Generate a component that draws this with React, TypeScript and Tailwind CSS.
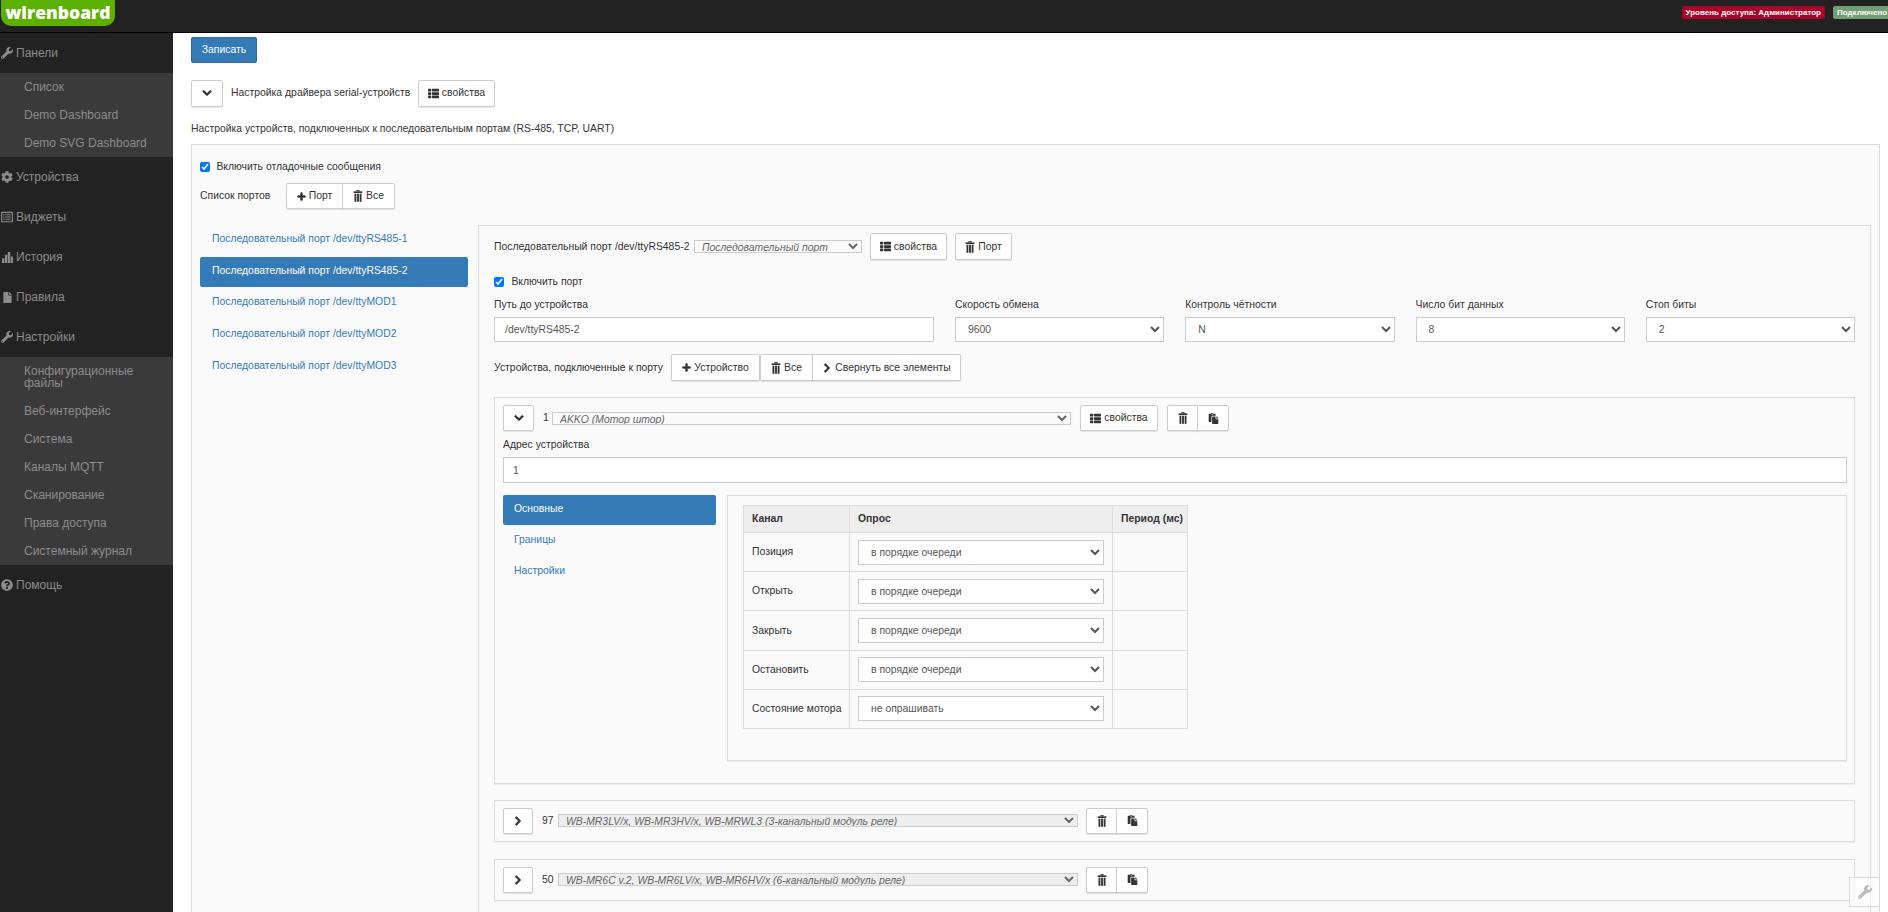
import type { ReactNode } from 'react';
import {
  FaChevronDown,
  FaChevronRight,
  FaCog,
  FaFile,
  FaPaste,
  FaPlus,
  FaQuestionCircle,
  FaRegListAlt,
  FaThList,
  FaWrench,
} from 'react-icons/fa';

function TrashIcon() {
  return (
    <svg viewBox="0 0 12 14" className="h-[12px] w-[10px]" fill="currentColor">
      <rect x="4" y="0" width="4" height="1.4" />
      <rect x="0.8" y="1.4" width="10.4" height="2" />
      <rect x="1.8" y="4.2" width="2.2" height="9.8" />
      <rect x="4.9" y="4.2" width="2.2" height="9.8" />
      <rect x="8" y="4.2" width="2.2" height="9.8" />
    </svg>
  );
}

function StatsIcon() {
  return (
    <svg viewBox="0 0 12 12" className="h-[11px] w-[11px]" fill="currentColor">
      <rect x="0" y="7" width="2.6" height="5" />
      <rect x="3.2" y="3" width="2.6" height="9" />
      <rect x="6.4" y="0" width="2.6" height="12" />
      <rect x="9.6" y="5" width="2.4" height="7" />
    </svg>
  );
}

function MenuItem({ icon, label }: { icon: ReactNode; label: string }) {
  return (
    <div className="flex h-[40px] items-center gap-[3px] pl-[1px]">
      <span className="flex w-[12px] justify-center">{icon}</span>
      <span>{label}</span>
    </div>
  );
}

function SubItem({ label }: { label: string }) {
  return <div className="flex h-[28px] items-center pl-[24px]">{label}</div>;
}

function Sidebar() {
  return (
    <aside className="flex w-[173px] shrink-0 flex-col bg-[#222222] text-[12px] text-[#8c8c8c]">
      <MenuItem icon={<FaWrench size={12} />} label="Панели" />
      <div className="bg-[#3a3a3a]">
        <SubItem label="Список" />
        <SubItem label="Demo Dashboard" />
        <SubItem label="Demo SVG Dashboard" />
      </div>
      <MenuItem icon={<FaCog size={12} />} label="Устройства" />
      <MenuItem icon={<FaRegListAlt size={12} />} label="Виджеты" />
      <MenuItem icon={<StatsIcon />} label="История" />
      <MenuItem icon={<FaFile size={11} />} label="Правила" />
      <MenuItem icon={<FaWrench size={12} />} label="Настройки" />
      <div className="bg-[#3a3a3a]">
        <div className="flex h-[40px] items-center pl-[24px] leading-[12px]">
          Конфигурационные
          <br />
          файлы
        </div>
        <SubItem label="Веб-интерфейс" />
        <SubItem label="Система" />
        <SubItem label="Каналы MQTT" />
        <SubItem label="Сканирование" />
        <SubItem label="Права доступа" />
        <SubItem label="Системный журнал" />
      </div>
      <MenuItem icon={<FaQuestionCircle size={12} />} label="Помощь" />
    </aside>
  );
}

function Btn({ children, className = '' }: { children: ReactNode; className?: string }) {
  return (
    <button
      type="button"
      className={`inline-flex items-center justify-center gap-[3px] border border-[#cccccc] bg-white text-[#333333] shadow-[0_1px_1px_rgba(0,0,0,0.1)] ${className}`}
    >
      {children}
    </button>
  );
}

const boldIcon = 'stroke-current stroke-[40]';

function Toggle({ open, className = 'w-[31px]' }: { open: boolean; className?: string }) {
  return (
    <Btn className={`h-[26px] rounded-[2px] ${className}`}>
      {open ? <FaChevronDown size={10} className={boldIcon} /> : <FaChevronRight size={10} className={boldIcon} />}
    </Btn>
  );
}

function Props({ className }: { className: string }) {
  return (
    <Btn className={`rounded-[2px] ${className}`}>
      <FaThList size={11} />
      свойства
    </Btn>
  );
}

function Field({ label, children }: { label: string; children: ReactNode }) {
  return (
    <div>
      <div className="h-[12px] leading-[12px]">{label}</div>
      <div className="mt-[6px]">{children}</div>
    </div>
  );
}

function FormSelect({ value }: { value: string }) {
  return (
    <select
      defaultValue={value}
      className="h-[25px] w-full border border-[#cccccc] bg-white pl-[8px] text-[#555555]"
    >
      <option>{value}</option>
    </select>
  );
}

function DeviceActions() {
  return (
    <div className="flex">
      <Btn className="h-[26px] w-[31px] rounded-l-[2px]">
        <TrashIcon />
      </Btn>
      <Btn className="-ml-px h-[26px] w-[32px] rounded-r-[2px]">
        <FaPaste size={11} />
      </Btn>
    </div>
  );
}

const channels = [
  { name: 'Позиция', poll: 'в порядке очереди' },
  { name: 'Открыть', poll: 'в порядке очереди' },
  { name: 'Закрыть', poll: 'в порядке очереди' },
  { name: 'Остановить', poll: 'в порядке очереди' },
  { name: 'Состояние мотора', poll: 'не опрашивать' },
];

function ChannelTable() {
  return (
    <table className="w-[444px] table-fixed border-collapse border border-[#dddddd]">
      <colgroup>
        <col className="w-[106px]" />
        <col className="w-[263px]" />
        <col className="w-[75px]" />
      </colgroup>
      <thead>
        <tr className="h-[27px] bg-[#eeeeee] text-left font-bold">
          <th className="border border-[#dddddd] px-[8px]">Канал</th>
          <th className="border border-[#dddddd] px-[8px]">Опрос</th>
          <th className="whitespace-nowrap border border-[#dddddd] px-[8px]">Период (мс)</th>
        </tr>
      </thead>
      <tbody>
        {channels.map((c) => (
          <tr key={c.name} className="h-[39.2px]">
            <td className="whitespace-nowrap border border-[#dddddd] px-[8px]">{c.name}</td>
            <td className="border border-[#dddddd] px-[8px]">
              <FormSelect value={c.poll} />
            </td>
            <td className="border border-[#dddddd]" />
          </tr>
        ))}
      </tbody>
    </table>
  );
}

function ExpandedDevice() {
  return (
    <div className="mt-[16px] border border-[#dddddd] pb-[22px] pl-[8px] pr-[7px] pt-[7px] shadow-[0_1px_1px_rgba(0,0,0,0.05)]">
      <div className="flex h-[26px] items-center">
        <Toggle open />
        <span className="ml-[9px] w-[9px]">1</span>
        <select
          defaultValue="akko"
          className="h-[13px] w-[519px] border border-[#cccccc] py-0 pl-[3px] italic leading-none text-[#666666]"
        >
          <option value="akko">AKKO (Мотор штор)</option>
        </select>
        <Props className="ml-[9px] h-[26px] w-[78px]" />
        <div className="ml-[9px]">
          <DeviceActions />
        </div>
      </div>
      <div className="mt-[8px] h-[12px] leading-[12px]">Адрес устройства</div>
      <input
        readOnly
        value="1"
        className="mt-[6px] block h-[26px] w-full border border-[#cccccc] bg-white pl-[9px] text-[#555555]"
      />
      <div className="mt-[12px] flex gap-[11px]">
        <div className="flex w-[213px] shrink-0 flex-col gap-[1px]">
          <div className="flex h-[30px] items-center rounded-[2px] bg-[#337ab7] pb-[2px] pl-[11px] text-white">Основные</div>
          <div className="flex h-[30px] items-center pb-[2px] pl-[11px] text-[#337ab7]">Границы</div>
          <div className="flex h-[30px] items-center pb-[2px] pl-[11px] text-[#337ab7]">Настройки</div>
        </div>
        <div className="flex-1 border border-[#dddddd] pb-[31px] pl-[15px] pt-[9px] shadow-[0_1px_1px_rgba(0,0,0,0.05)]">
          <ChannelTable />
        </div>
      </div>
    </div>
  );
}

function CollapsedDevice({ num, name }: { num: string; name: string }) {
  return (
    <div className="flex h-[42px] items-center border border-[#dddddd] pl-[8px] shadow-[0_1px_1px_rgba(0,0,0,0.05)]">
      <Toggle open={false} className="w-[30px]" />
      <span className="ml-[9px] w-[16px]">{num}</span>
      <select
        defaultValue={name}
        className="h-[13px] w-[520px] border border-[#cccccc] bg-[#eeeeee] py-0 pl-[3px] italic leading-none text-[#666666]"
      >
        <option>{name}</option>
      </select>
      <div className="ml-[8px]">
        <DeviceActions />
      </div>
    </div>
  );
}

function PortPanel() {
  return (
    <div className="flex-1 border-l border-r border-t border-[#dddddd] px-[15px] pt-[7px]">
      <div className="flex h-[27px] items-center">
        <span className="w-[200px] whitespace-nowrap">Последовательный порт /dev/ttyRS485-2</span>
        <select
          defaultValue="serial"
          className="h-[13px] w-[168px] border border-[#cccccc] py-0 pl-[3px] italic leading-none text-[#666666]"
        >
          <option value="serial">Последовательный порт</option>
        </select>
        <Props className="ml-[8px] h-[27px] w-[77px]" />
        <Btn className="ml-[8px] h-[27px] w-[57px] rounded-[2px]">
          <TrashIcon />
          Порт
        </Btn>
      </div>
      <label className="mt-[16px] flex h-[12px] items-center gap-[7px]">
        <input type="checkbox" defaultChecked className="h-[10.4px] w-[10.4px]" />
        Включить порт
      </label>
      <div className="mt-[11px] grid grid-cols-[440px_repeat(4,1fr)] gap-x-[21px]">
        <Field label="Путь до устройства">
          <input
            readOnly
            value="/dev/ttyRS485-2"
            className="block h-[25px] w-full border border-[#cccccc] bg-white pl-[10px] text-[#555555]"
          />
        </Field>
        <Field label="Скорость обмена">
          <FormSelect value="9600" />
        </Field>
        <Field label="Контроль чётности">
          <FormSelect value="N" />
        </Field>
        <Field label="Число бит данных">
          <FormSelect value="8" />
        </Field>
        <Field label="Стоп биты">
          <FormSelect value="2" />
        </Field>
      </div>
      <div className="mt-[12px] flex h-[27px] items-center">
        <span className="w-[177px] whitespace-nowrap">Устройства, подключенные к порту</span>
        <Btn className="h-[27px] w-[89px] rounded-[2px]">
          <FaPlus size={9} className={boldIcon} />
          Устройство
        </Btn>
        <Btn className="h-[27px] w-[53px] rounded-l-[2px]">
          <TrashIcon />
          Все
        </Btn>
        <Btn className="-ml-px h-[27px] w-[149px] rounded-r-[2px]">
          <FaChevronRight size={10} className={boldIcon} />
          Свернуть все элементы
        </Btn>
      </div>
      <ExpandedDevice />
      <div className="mt-[16px]">
        <CollapsedDevice num="97" name="WB-MR3LV/x, WB-MR3HV/x, WB-MRWL3 (3-канальный модуль реле)" />
      </div>
      <div className="mt-[17px]">
        <CollapsedDevice num="50" name="WB-MR6C v.2, WB-MR6LV/x, WB-MR6HV/x (6-канальный модуль реле)" />
      </div>
    </div>
  );
}

const ports = ['ttyRS485-1', 'ttyRS485-2', 'ttyMOD1', 'ttyMOD2', 'ttyMOD3'];

export default function App() {
  return (
    <div className="flex h-screen flex-col overflow-hidden bg-white font-['Liberation_Sans',sans-serif] text-[10.4px] text-[#333333]">
      <header className="flex h-[33px] shrink-0 items-start overflow-hidden border-b border-black bg-[#222222] pl-[1px]">
        <div className="flex h-[26px] w-[114px] items-center justify-center rounded-b-[10px] bg-[#5cb000] font-['Open_Sans',sans-serif] text-[17.5px] font-extrabold leading-none text-white">
          wirenboard
        </div>
        <div className="ml-auto flex shrink-0 gap-[8px] pt-[6px] text-[8px] font-bold leading-[13px] text-white">
          <span className="rounded-[2px] bg-[#a90329] px-[4px]">Уровень доступа: Администратор</span>
          <span className="w-[55px] whitespace-nowrap rounded-l-[2px] bg-[#739e73] pl-[4px]">Подключено</span>
        </div>
      </header>
      <div className="flex min-h-0 flex-1">
        <Sidebar />
        <main className="flex min-w-0 flex-1 flex-col pl-[18px] pr-[8px] pt-[4px]">
          <button
            type="button"
            className="block h-[26px] w-[66px] shrink-0 rounded-[2px] border border-[#2e6da4] bg-[#337ab7] text-white"
          >
            Записать
          </button>
          <div className="mt-[16px] flex h-[28px] shrink-0 items-center">
            <Btn className="h-[27px] w-[32px] rounded-[2px]">
              <FaChevronDown size={10} className={boldIcon} />
            </Btn>
            <span className="ml-[8px] w-[187px] whitespace-nowrap">Настройка драйвера serial-устройств</span>
            <Props className="h-[27px] w-[77px]" />
          </div>
          <p className="mt-[16px] h-[12px] shrink-0 leading-[12px]">
            Настройка устройств, подключенных к последовательным портам (RS-485, TCP, UART)
          </p>
          <div className="mt-[9px] flex min-h-0 flex-1 flex-col border-l border-r border-t border-[#dddddd] bg-[#fafafa] pl-[8px] pr-[8px] pt-[16px]">
            <label className="flex h-[12px] shrink-0 items-center gap-[6px]">
              <input type="checkbox" defaultChecked className="h-[10.4px] w-[10.4px]" />
              Включить отладочные сообщения
            </label>
            <div className="mt-[10px] flex h-[26px] shrink-0 items-center">
              <span className="w-[86px]">Список портов</span>
              <Btn className="h-[26px] w-[57px] rounded-l-[2px]">
                <FaPlus size={9} className={boldIcon} />
                Порт
              </Btn>
              <Btn className="-ml-px h-[26px] w-[53px] rounded-r-[2px]">
                <TrashIcon />
                Все
              </Btn>
            </div>
            <div className="mt-[16px] flex min-h-0 flex-1 gap-[10px]">
              <nav className="flex w-[268px] shrink-0 flex-col gap-[1.6px]">
                {ports.map((p) => (
                  <div
                    key={p}
                    className={`flex h-[30px] items-center rounded-[2px] pb-[2px] pl-[12px] ${
                      p === 'ttyRS485-2' ? 'bg-[#337ab7] text-white' : 'text-[#337ab7]'
                    }`}
                  >
                    Последовательный порт /dev/{p}
                  </div>
                ))}
              </nav>
              <PortPanel />
            </div>
          </div>
        </main>
      </div>
      <div className="fixed bottom-[5px] right-[8px] flex h-[30px] w-[31px] items-center justify-center border border-[#dddddd] bg-white/60 text-[#bbbbbb]">
        <FaWrench size={14} />
      </div>
    </div>
  );
}
